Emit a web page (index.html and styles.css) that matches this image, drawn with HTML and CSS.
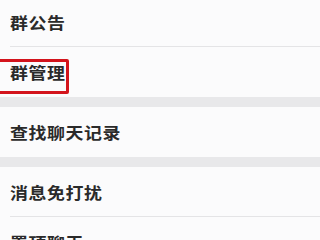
FILE: index.html
```html
<!DOCTYPE html>
<html lang="zh-CN">
<head>
<meta charset="utf-8">
<title>群设置</title>
<link rel="stylesheet" href="styles.css">
</head>
<body>
<div class="page">
  <section class="group first">
    <div class="row divided"><span class="label">群公告</span></div>
    <div class="row highlighted"><span class="label">群管理</span><span class="mark"></span></div>
  </section>
  <section class="group">
    <div class="row"><span class="label">查找聊天记录</span></div>
  </section>
  <section class="group">
    <div class="row divided"><span class="label">消息免打扰</span></div>
    <div class="row"><span class="label">置顶聊天</span></div>
  </section>
</div>
</body>
</html>
```

FILE: styles.css
```css
html, body {
  margin: 0;
  padding: 0;
  background: #e8e8ea;
}
body {
  width: 320px;
  height: 240px;
  overflow: hidden;
  font-family: "Noto Sans CJK SC", "Noto Sans", sans-serif;
}
.page {
  display: flex;
  flex-direction: column;
  gap: 10px;
}
.group {
  background: #fbfbfc;
  display: flex;
  flex-direction: column;
}
.group.first {
  margin-top: -3px;
}
.row {
  position: relative;
  height: 50px;
  display: flex;
  align-items: center;
  padding-left: 10px;
  box-sizing: border-box;
}
.row.divided::after {
  content: "";
  position: absolute;
  left: 10px;
  right: 0;
  bottom: 0;
  height: 1px;
  background: #e4e4e6;
}
.label {
  display: inline-block;
  font-size: 16px;
  letter-spacing: 0.5px;
  color: #2a2a2a;
  font-weight: 600;
  line-height: 1;
  transform: scaleX(1.12);
  transform-origin: left center;
}
.mark {
  position: absolute;
  left: -4px;
  top: 12px;
  width: 73px;
  height: 35px;
  box-sizing: border-box;
  border: 3px solid #d3141c;
  border-radius: 2px;
}
```
